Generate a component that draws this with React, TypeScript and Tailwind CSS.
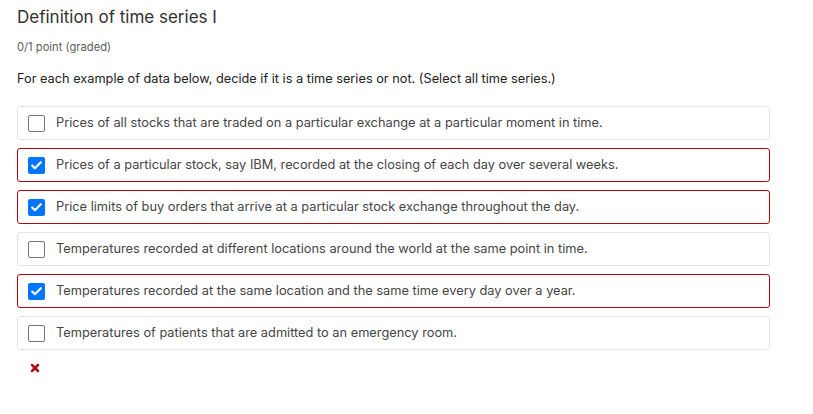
import { Check, X } from 'lucide-react'

const options = [
  { label: 'Prices of all stocks that are traded on a particular exchange at a particular moment in time.', checked: false },
  { label: 'Prices of a particular stock, say IBM, recorded at the closing of each day over several weeks.', checked: true },
  { label: 'Price limits of buy orders that arrive at a particular stock exchange throughout the day.', checked: true },
  { label: 'Temperatures recorded at different locations around the world at the same point in time.', checked: false },
  { label: 'Temperatures recorded at the same location and the same time every day over a year.', checked: true },
  { label: 'Temperatures of patients that are admitted to an emergency room.', checked: false },
]

function Box({ checked }: { checked: boolean }) {
  if (checked) {
    return (
      <span className="flex h-[17px] w-[17px] shrink-0 items-center justify-center rounded-[2px] bg-[#0075ff]">
        <Check className="h-[13px] w-[13px] text-white" strokeWidth={4} />
      </span>
    )
  }
  return <span className="h-[17px] w-[17px] shrink-0 rounded-[2px] border border-[#767676] bg-white" />
}

export default function App() {
  return (
    <div className="min-h-[414px] bg-white pl-[17px] pr-[43px] pt-[5px] font-['Inter',sans-serif] text-[#414141]">
      <h2 className="text-[17px] leading-[24px] text-[#313131]">Definition of time series I</h2>
      <div className="mt-[11px] text-[11.2px] leading-[14px] text-[#5e5e5e]">0/1 point (graded)</div>
      <p className="mt-[17px] text-[12.75px] leading-[16px] text-[#222]">
        For each example of data below, decide if it is a time series or not. (Select all time series.)
      </p>
      <div className="mt-[19px] flex flex-col gap-[8px]">
        {options.map((o, i) => (
          <label
            key={i}
            className={`flex h-[34px] items-center gap-[11px] rounded-[3px] border pl-[10px] ${
              o.checked ? 'border-[#b20610]' : 'border-[#e3e3e3]'
            }`}
          >
            <Box checked={o.checked} />
            <span className="text-[12.8px] text-[#454545]">{o.label}</span>
          </label>
        ))}
      </div>
      <div className="mt-[12px] pl-[12px]">
        <X className="h-[12px] w-[12px] text-[#b20610]" strokeWidth={5} />
      </div>
    </div>
  )
}
